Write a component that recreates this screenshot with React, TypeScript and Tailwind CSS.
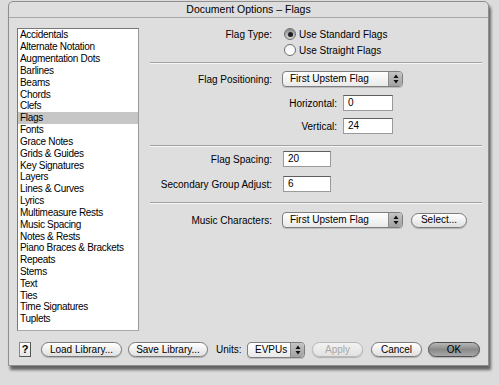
import React from "react"

const categories = [
  "Accidentals",
  "Alternate Notation",
  "Augmentation Dots",
  "Barlines",
  "Beams",
  "Chords",
  "Clefs",
  "Flags",
  "Fonts",
  "Grace Notes",
  "Grids & Guides",
  "Key Signatures",
  "Layers",
  "Lines & Curves",
  "Lyrics",
  "Multimeasure Rests",
  "Music Spacing",
  "Notes & Rests",
  "Piano Braces & Brackets",
  "Repeats",
  "Stems",
  "Text",
  "Ties",
  "Time Signatures",
  "Tuplets",
]

const Radio = ({ checked }: { checked?: boolean }) => (
  <span
    className={
      "w-[12px] h-[12px] rounded-full border border-[#6f6f6f] flex items-center justify-center " +
      (checked
        ? "bg-gradient-to-b from-[#8c8c8c] to-[#d6d6d6]"
        : "bg-gradient-to-b from-[#f4f4f4] to-[#ffffff]")
    }
  >
    {checked && <span className="w-[5px] h-[5px] rounded-full bg-[#1e1e1e]" />}
  </span>
)

const Stepper = () => (
  <span className="w-[14px] h-full bg-gradient-to-b from-[#c4c4c4] to-[#a2a2a2] border-l border-[#8a8a8a] rounded-r-[3px] flex items-center justify-center">
    <svg width="6" height="10" viewBox="0 0 6 10">
      <path d="M3 0.5 L5.5 4 L0.5 4 Z" fill="#111" />
      <path d="M3 9.5 L5.5 6 L0.5 6 Z" fill="#111" />
    </svg>
  </span>
)

const Popup = ({ label, width }: { label: string; width: string }) => (
  <div
    className={
      width +
      " h-[16px] rounded-[4px] border border-[#7e7e7e] bg-gradient-to-b from-[#ffffff] to-[#e9e9e9] flex items-center overflow-hidden shadow-[0_1px_0_rgba(0,0,0,0.15)]"
    }
  >
    <span className="flex-1 pl-[7px] leading-none">{label}</span>
    <Stepper />
  </div>
)

const Field = ({ value, width }: { value: string; width: string }) => (
  <div
    className={
      width +
      " h-[16px] bg-white border border-[#9a9a9a] border-t-[#5e5e5e] flex items-center pl-[4px] leading-none"
    }
  >
    {value}
  </div>
)

const PillButton = ({
  label,
  width,
  variant = "normal",
}: {
  label: string
  width: string
  variant?: "normal" | "default" | "disabled"
}) => {
  const look =
    variant === "default"
      ? "border-[#4e4e4e] bg-gradient-to-b from-[#b8b8b8] via-[#8a8a8a] to-[#a8a8a8] text-black"
      : variant === "disabled"
        ? "border-[#b8b8b8] bg-gradient-to-b from-[#f2f2f2] to-[#e2e2e2] text-[#a8a8a8]"
        : "border-[#7a7a7a] bg-gradient-to-b from-[#ffffff] to-[#e0e0e0] text-black"
  return (
    <div
      className={
        width +
        " h-[15px] rounded-full border flex items-center justify-center leading-none shadow-[0_1px_1px_rgba(0,0,0,0.2)] " +
        look
      }
    >
      {label}
    </div>
  )
}

const Separator = () => (
  <div className="ml-[11px] mr-[6px] border-t border-[#a2a2a2] border-b border-b-[#f6f6f6]" />
)

export default function App() {
  return (
    <div className="w-[499px] h-[385px] bg-[#dcdcdc] pt-[1px] pl-[8px] font-['Liberation_Sans',Arial,sans-serif] text-[10px] text-black overflow-hidden">
      <div className="w-[481px] h-[365px] border border-[#8e8e8e] rounded-t-[5px] bg-[#dedede] shadow-[2px_4px_3px_rgba(0,0,0,0.55)] flex flex-col">
        <div className="h-[16px] flex items-center justify-center text-[10.5px] border-b border-[#a8a8a8] shrink-0">
          Document Options – Flags
        </div>

        <div className="flex h-[313px] shrink-0">
          <div className="ml-[8px] mt-[10px] w-[122px] h-[303px] bg-white border border-[#777] border-r-[#9a9a9a] border-b-[#a8a8a8] shrink-0 overflow-hidden">
            {categories.map((c) => (
              <div
                key={c}
                className={
                  "h-[11.84px] flex items-center pl-[2px] tracking-[-0.3px] whitespace-nowrap " +
                  (c === "Flags" ? "bg-[#c6c6c6]" : "")
                }
              >
                {c}
              </div>
            ))}
          </div>

          <div className="flex-1 flex flex-col">
            <div className="mt-[9px] h-[14px] flex items-center">
              <span className="w-[133px] text-right">Flag Type:</span>
              <span className="ml-[12px]">
                <Radio checked />
              </span>
              <span className="ml-[3px]">Use Standard Flags</span>
            </div>
            <div className="mt-[2px] h-[14px] flex items-center">
              <span className="w-[133px]" />
              <span className="ml-[12px]">
                <Radio />
              </span>
              <span className="ml-[3px]">Use Straight Flags</span>
            </div>

            <div className="mt-[5px]">
              <Separator />
            </div>

            <div className="mt-[7px] flex items-center">
              <span className="w-[133px] text-right">Flag Positioning:</span>
              <span className="ml-[10px]">
                <Popup label="First Upstem Flag" width="w-[121px]" />
              </span>
            </div>
            <div className="mt-[8px] flex items-center">
              <span className="w-[198px] text-right">Horizontal:</span>
              <span className="ml-[6px]">
                <Field value="0" width="w-[50px]" />
              </span>
            </div>
            <div className="mt-[7px] flex items-center">
              <span className="w-[198px] text-right">Vertical:</span>
              <span className="ml-[6px]">
                <Field value="24" width="w-[50px]" />
              </span>
            </div>

            <div className="mt-[11px]">
              <Separator />
            </div>

            <div className="mt-[4px] flex items-center">
              <span className="w-[133px] text-right">Flag Spacing:</span>
              <span className="ml-[11px]">
                <Field value="20" width="w-[48px]" />
              </span>
            </div>
            <div className="mt-[9px] flex items-center">
              <span className="w-[133px] text-right whitespace-nowrap">Secondary Group Adjust:</span>
              <span className="ml-[11px]">
                <Field value="6" width="w-[48px]" />
              </span>
            </div>

            <div className="mt-[10px]">
              <Separator />
            </div>

            <div className="mt-[8px] flex items-center">
              <span className="w-[133px] text-right">Music Characters:</span>
              <span className="ml-[10px]">
                <Popup label="First Upstem Flag" width="w-[121px]" />
              </span>
              <span className="ml-[8px]">
                <PillButton label="Select..." width="w-[56px]" />
              </span>
            </div>
          </div>
        </div>

        <div className="mt-[11px] h-[15px] flex items-center pl-[10px] shrink-0">
          <div className="w-[12px] h-[15px] border border-[#555] border-t-[#888] border-l-[#888] bg-gradient-to-b from-white to-[#e6e6e6] flex items-center justify-center font-bold text-[11px] leading-none">
            ?
          </div>
          <span className="ml-[10px]">
            <PillButton label="Load Library..." width="w-[81px]" />
          </span>
          <span className="ml-[6px]">
            <PillButton label="Save Library..." width="w-[80px]" />
          </span>
          <span className="ml-[8px] w-[31px]">Units:</span>
          <span>
            <Popup label="EVPUs" width="w-[58px]" />
          </span>
          <span className="ml-[7px]">
            <PillButton label="Apply" width="w-[51px]" variant="disabled" />
          </span>
          <span className="ml-[8px]">
            <PillButton label="Cancel" width="w-[51px]" />
          </span>
          <span className="ml-[6px]">
            <PillButton label="OK" width="w-[52px]" variant="default" />
          </span>
        </div>
      </div>
    </div>
  )
}
